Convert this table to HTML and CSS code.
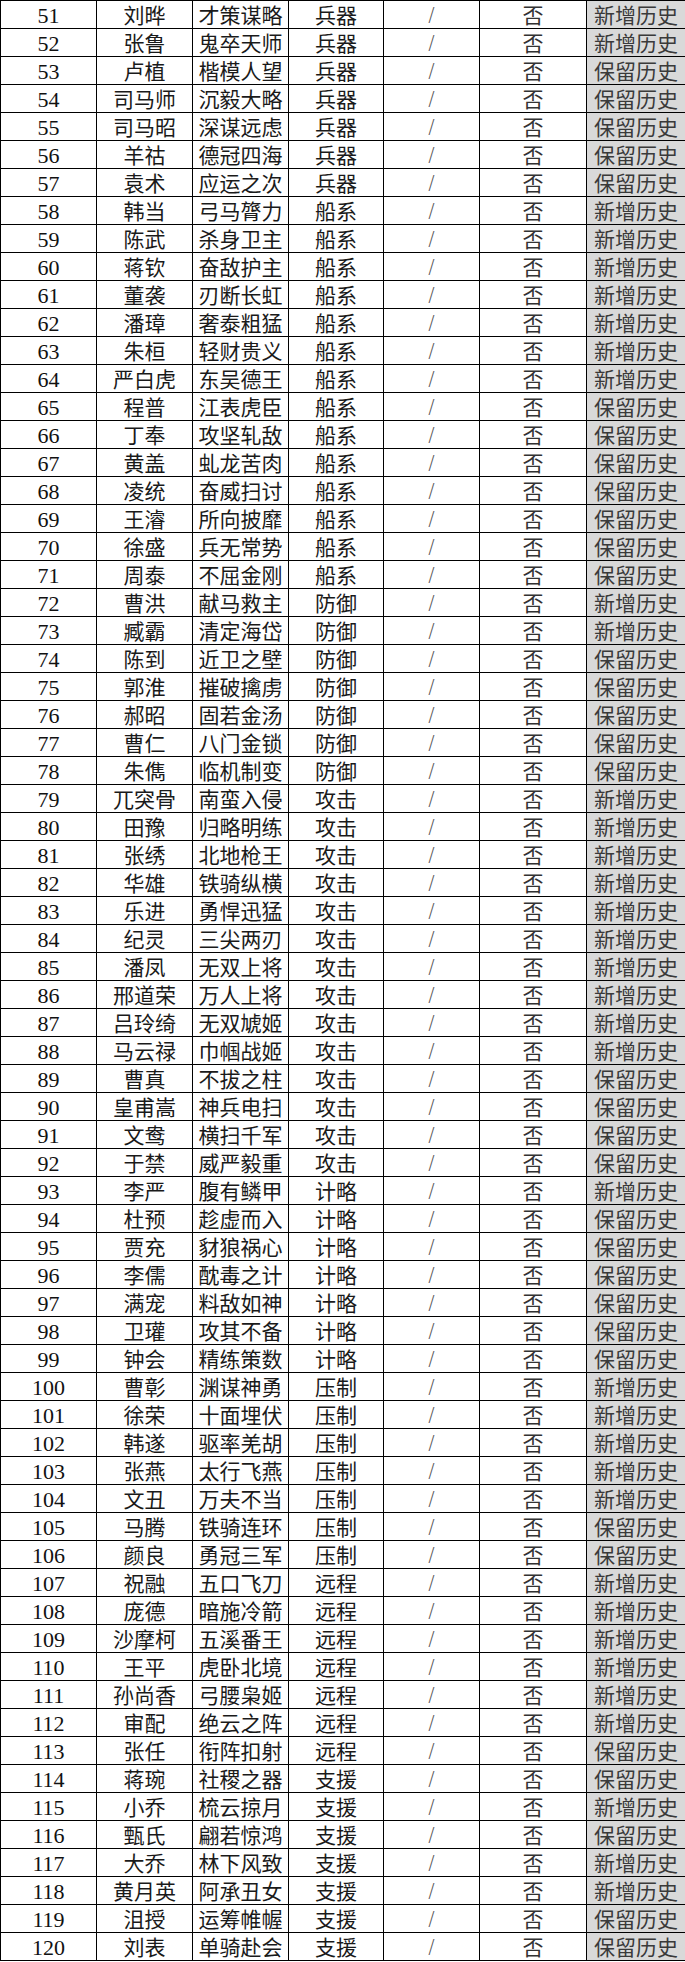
FILE: index.html
```html
<!DOCTYPE html>
<html lang="zh-CN">
<head>
<meta charset="utf-8">
<title>武将技能表</title>
<link rel="stylesheet" href="styles.css">
</head>
<body>
<div class="sheet">
<div class="row"><div class="c num">51</div><div class="c">刘晔</div><div class="c">才策谋略</div><div class="c">兵器</div><div class="c slash">/</div><div class="c no">否</div><div class="c tag">新增历史</div></div>
<div class="row"><div class="c num">52</div><div class="c">张鲁</div><div class="c">鬼卒天师</div><div class="c">兵器</div><div class="c slash">/</div><div class="c no">否</div><div class="c tag">新增历史</div></div>
<div class="row"><div class="c num">53</div><div class="c">卢植</div><div class="c">楷模人望</div><div class="c">兵器</div><div class="c slash">/</div><div class="c no">否</div><div class="c tag">保留历史</div></div>
<div class="row"><div class="c num">54</div><div class="c">司马师</div><div class="c">沉毅大略</div><div class="c">兵器</div><div class="c slash">/</div><div class="c no">否</div><div class="c tag">保留历史</div></div>
<div class="row"><div class="c num">55</div><div class="c">司马昭</div><div class="c">深谋远虑</div><div class="c">兵器</div><div class="c slash">/</div><div class="c no">否</div><div class="c tag">保留历史</div></div>
<div class="row"><div class="c num">56</div><div class="c">羊祜</div><div class="c">德冠四海</div><div class="c">兵器</div><div class="c slash">/</div><div class="c no">否</div><div class="c tag">保留历史</div></div>
<div class="row"><div class="c num">57</div><div class="c">袁术</div><div class="c">应运之次</div><div class="c">兵器</div><div class="c slash">/</div><div class="c no">否</div><div class="c tag">保留历史</div></div>
<div class="row"><div class="c num">58</div><div class="c">韩当</div><div class="c">弓马膂力</div><div class="c">船系</div><div class="c slash">/</div><div class="c no">否</div><div class="c tag">新增历史</div></div>
<div class="row"><div class="c num">59</div><div class="c">陈武</div><div class="c">杀身卫主</div><div class="c">船系</div><div class="c slash">/</div><div class="c no">否</div><div class="c tag">新增历史</div></div>
<div class="row"><div class="c num">60</div><div class="c">蒋钦</div><div class="c">奋敌护主</div><div class="c">船系</div><div class="c slash">/</div><div class="c no">否</div><div class="c tag">新增历史</div></div>
<div class="row"><div class="c num">61</div><div class="c">董袭</div><div class="c">刃断长虹</div><div class="c">船系</div><div class="c slash">/</div><div class="c no">否</div><div class="c tag">新增历史</div></div>
<div class="row"><div class="c num">62</div><div class="c">潘璋</div><div class="c">奢泰粗猛</div><div class="c">船系</div><div class="c slash">/</div><div class="c no">否</div><div class="c tag">新增历史</div></div>
<div class="row"><div class="c num">63</div><div class="c">朱桓</div><div class="c">轻财贵义</div><div class="c">船系</div><div class="c slash">/</div><div class="c no">否</div><div class="c tag">新增历史</div></div>
<div class="row"><div class="c num">64</div><div class="c">严白虎</div><div class="c">东吴德王</div><div class="c">船系</div><div class="c slash">/</div><div class="c no">否</div><div class="c tag">新增历史</div></div>
<div class="row"><div class="c num">65</div><div class="c">程普</div><div class="c">江表虎臣</div><div class="c">船系</div><div class="c slash">/</div><div class="c no">否</div><div class="c tag">保留历史</div></div>
<div class="row"><div class="c num">66</div><div class="c">丁奉</div><div class="c">攻坚轧敌</div><div class="c">船系</div><div class="c slash">/</div><div class="c no">否</div><div class="c tag">保留历史</div></div>
<div class="row"><div class="c num">67</div><div class="c">黄盖</div><div class="c">虬龙苦肉</div><div class="c">船系</div><div class="c slash">/</div><div class="c no">否</div><div class="c tag">保留历史</div></div>
<div class="row"><div class="c num">68</div><div class="c">凌统</div><div class="c">奋威扫讨</div><div class="c">船系</div><div class="c slash">/</div><div class="c no">否</div><div class="c tag">保留历史</div></div>
<div class="row"><div class="c num">69</div><div class="c">王濬</div><div class="c">所向披靡</div><div class="c">船系</div><div class="c slash">/</div><div class="c no">否</div><div class="c tag">保留历史</div></div>
<div class="row"><div class="c num">70</div><div class="c">徐盛</div><div class="c">兵无常势</div><div class="c">船系</div><div class="c slash">/</div><div class="c no">否</div><div class="c tag">保留历史</div></div>
<div class="row"><div class="c num">71</div><div class="c">周泰</div><div class="c">不屈金刚</div><div class="c">船系</div><div class="c slash">/</div><div class="c no">否</div><div class="c tag">保留历史</div></div>
<div class="row"><div class="c num">72</div><div class="c">曹洪</div><div class="c">献马救主</div><div class="c">防御</div><div class="c slash">/</div><div class="c no">否</div><div class="c tag">新增历史</div></div>
<div class="row"><div class="c num">73</div><div class="c">臧霸</div><div class="c">清定海岱</div><div class="c">防御</div><div class="c slash">/</div><div class="c no">否</div><div class="c tag">新增历史</div></div>
<div class="row"><div class="c num">74</div><div class="c">陈到</div><div class="c">近卫之壁</div><div class="c">防御</div><div class="c slash">/</div><div class="c no">否</div><div class="c tag">保留历史</div></div>
<div class="row"><div class="c num">75</div><div class="c">郭淮</div><div class="c">摧破擒虏</div><div class="c">防御</div><div class="c slash">/</div><div class="c no">否</div><div class="c tag">保留历史</div></div>
<div class="row"><div class="c num">76</div><div class="c">郝昭</div><div class="c">固若金汤</div><div class="c">防御</div><div class="c slash">/</div><div class="c no">否</div><div class="c tag">保留历史</div></div>
<div class="row"><div class="c num">77</div><div class="c">曹仁</div><div class="c">八门金锁</div><div class="c">防御</div><div class="c slash">/</div><div class="c no">否</div><div class="c tag">保留历史</div></div>
<div class="row"><div class="c num">78</div><div class="c">朱儁</div><div class="c">临机制变</div><div class="c">防御</div><div class="c slash">/</div><div class="c no">否</div><div class="c tag">保留历史</div></div>
<div class="row"><div class="c num">79</div><div class="c">兀突骨</div><div class="c">南蛮入侵</div><div class="c">攻击</div><div class="c slash">/</div><div class="c no">否</div><div class="c tag">新增历史</div></div>
<div class="row"><div class="c num">80</div><div class="c">田豫</div><div class="c">归略明练</div><div class="c">攻击</div><div class="c slash">/</div><div class="c no">否</div><div class="c tag">新增历史</div></div>
<div class="row"><div class="c num">81</div><div class="c">张绣</div><div class="c">北地枪王</div><div class="c">攻击</div><div class="c slash">/</div><div class="c no">否</div><div class="c tag">新增历史</div></div>
<div class="row"><div class="c num">82</div><div class="c">华雄</div><div class="c">铁骑纵横</div><div class="c">攻击</div><div class="c slash">/</div><div class="c no">否</div><div class="c tag">新增历史</div></div>
<div class="row"><div class="c num">83</div><div class="c">乐进</div><div class="c">勇悍迅猛</div><div class="c">攻击</div><div class="c slash">/</div><div class="c no">否</div><div class="c tag">新增历史</div></div>
<div class="row"><div class="c num">84</div><div class="c">纪灵</div><div class="c">三尖两刃</div><div class="c">攻击</div><div class="c slash">/</div><div class="c no">否</div><div class="c tag">新增历史</div></div>
<div class="row"><div class="c num">85</div><div class="c">潘凤</div><div class="c">无双上将</div><div class="c">攻击</div><div class="c slash">/</div><div class="c no">否</div><div class="c tag">新增历史</div></div>
<div class="row"><div class="c num">86</div><div class="c">邢道荣</div><div class="c">万人上将</div><div class="c">攻击</div><div class="c slash">/</div><div class="c no">否</div><div class="c tag">新增历史</div></div>
<div class="row"><div class="c num">87</div><div class="c">吕玲绮</div><div class="c">无双虓姬</div><div class="c">攻击</div><div class="c slash">/</div><div class="c no">否</div><div class="c tag">新增历史</div></div>
<div class="row"><div class="c num">88</div><div class="c">马云禄</div><div class="c">巾帼战姬</div><div class="c">攻击</div><div class="c slash">/</div><div class="c no">否</div><div class="c tag">新增历史</div></div>
<div class="row"><div class="c num">89</div><div class="c">曹真</div><div class="c">不拔之柱</div><div class="c">攻击</div><div class="c slash">/</div><div class="c no">否</div><div class="c tag">保留历史</div></div>
<div class="row"><div class="c num">90</div><div class="c">皇甫嵩</div><div class="c">神兵电扫</div><div class="c">攻击</div><div class="c slash">/</div><div class="c no">否</div><div class="c tag">保留历史</div></div>
<div class="row"><div class="c num">91</div><div class="c">文鸯</div><div class="c">横扫千军</div><div class="c">攻击</div><div class="c slash">/</div><div class="c no">否</div><div class="c tag">保留历史</div></div>
<div class="row"><div class="c num">92</div><div class="c">于禁</div><div class="c">威严毅重</div><div class="c">攻击</div><div class="c slash">/</div><div class="c no">否</div><div class="c tag">保留历史</div></div>
<div class="row"><div class="c num">93</div><div class="c">李严</div><div class="c">腹有鳞甲</div><div class="c">计略</div><div class="c slash">/</div><div class="c no">否</div><div class="c tag">新增历史</div></div>
<div class="row"><div class="c num">94</div><div class="c">杜预</div><div class="c">趁虚而入</div><div class="c">计略</div><div class="c slash">/</div><div class="c no">否</div><div class="c tag">保留历史</div></div>
<div class="row"><div class="c num">95</div><div class="c">贾充</div><div class="c">豺狼祸心</div><div class="c">计略</div><div class="c slash">/</div><div class="c no">否</div><div class="c tag">保留历史</div></div>
<div class="row"><div class="c num">96</div><div class="c">李儒</div><div class="c">酖毒之计</div><div class="c">计略</div><div class="c slash">/</div><div class="c no">否</div><div class="c tag">保留历史</div></div>
<div class="row"><div class="c num">97</div><div class="c">满宠</div><div class="c">料敌如神</div><div class="c">计略</div><div class="c slash">/</div><div class="c no">否</div><div class="c tag">保留历史</div></div>
<div class="row"><div class="c num">98</div><div class="c">卫瓘</div><div class="c">攻其不备</div><div class="c">计略</div><div class="c slash">/</div><div class="c no">否</div><div class="c tag">保留历史</div></div>
<div class="row"><div class="c num">99</div><div class="c">钟会</div><div class="c">精练策数</div><div class="c">计略</div><div class="c slash">/</div><div class="c no">否</div><div class="c tag">保留历史</div></div>
<div class="row"><div class="c num">100</div><div class="c">曹彰</div><div class="c">渊谋神勇</div><div class="c">压制</div><div class="c slash">/</div><div class="c no">否</div><div class="c tag">新增历史</div></div>
<div class="row"><div class="c num">101</div><div class="c">徐荣</div><div class="c">十面埋伏</div><div class="c">压制</div><div class="c slash">/</div><div class="c no">否</div><div class="c tag">新增历史</div></div>
<div class="row"><div class="c num">102</div><div class="c">韩遂</div><div class="c">驱率羌胡</div><div class="c">压制</div><div class="c slash">/</div><div class="c no">否</div><div class="c tag">新增历史</div></div>
<div class="row"><div class="c num">103</div><div class="c">张燕</div><div class="c">太行飞燕</div><div class="c">压制</div><div class="c slash">/</div><div class="c no">否</div><div class="c tag">新增历史</div></div>
<div class="row"><div class="c num">104</div><div class="c">文丑</div><div class="c">万夫不当</div><div class="c">压制</div><div class="c slash">/</div><div class="c no">否</div><div class="c tag">新增历史</div></div>
<div class="row"><div class="c num">105</div><div class="c">马腾</div><div class="c">铁骑连环</div><div class="c">压制</div><div class="c slash">/</div><div class="c no">否</div><div class="c tag">保留历史</div></div>
<div class="row"><div class="c num">106</div><div class="c">颜良</div><div class="c">勇冠三军</div><div class="c">压制</div><div class="c slash">/</div><div class="c no">否</div><div class="c tag">保留历史</div></div>
<div class="row"><div class="c num">107</div><div class="c">祝融</div><div class="c">五口飞刀</div><div class="c">远程</div><div class="c slash">/</div><div class="c no">否</div><div class="c tag">新增历史</div></div>
<div class="row"><div class="c num">108</div><div class="c">庞德</div><div class="c">暗施冷箭</div><div class="c">远程</div><div class="c slash">/</div><div class="c no">否</div><div class="c tag">新增历史</div></div>
<div class="row"><div class="c num">109</div><div class="c">沙摩柯</div><div class="c">五溪番王</div><div class="c">远程</div><div class="c slash">/</div><div class="c no">否</div><div class="c tag">新增历史</div></div>
<div class="row"><div class="c num">110</div><div class="c">王平</div><div class="c">虎卧北境</div><div class="c">远程</div><div class="c slash">/</div><div class="c no">否</div><div class="c tag">新增历史</div></div>
<div class="row"><div class="c num">111</div><div class="c">孙尚香</div><div class="c">弓腰枭姬</div><div class="c">远程</div><div class="c slash">/</div><div class="c no">否</div><div class="c tag">新增历史</div></div>
<div class="row"><div class="c num">112</div><div class="c">审配</div><div class="c">绝云之阵</div><div class="c">远程</div><div class="c slash">/</div><div class="c no">否</div><div class="c tag">新增历史</div></div>
<div class="row"><div class="c num">113</div><div class="c">张任</div><div class="c">衔阵扣射</div><div class="c">远程</div><div class="c slash">/</div><div class="c no">否</div><div class="c tag">保留历史</div></div>
<div class="row"><div class="c num">114</div><div class="c">蒋琬</div><div class="c">社稷之器</div><div class="c">支援</div><div class="c slash">/</div><div class="c no">否</div><div class="c tag">保留历史</div></div>
<div class="row"><div class="c num">115</div><div class="c">小乔</div><div class="c">梳云掠月</div><div class="c">支援</div><div class="c slash">/</div><div class="c no">否</div><div class="c tag">新增历史</div></div>
<div class="row"><div class="c num">116</div><div class="c">甄氏</div><div class="c">翩若惊鸿</div><div class="c">支援</div><div class="c slash">/</div><div class="c no">否</div><div class="c tag">保留历史</div></div>
<div class="row"><div class="c num">117</div><div class="c">大乔</div><div class="c">林下风致</div><div class="c">支援</div><div class="c slash">/</div><div class="c no">否</div><div class="c tag">新增历史</div></div>
<div class="row"><div class="c num">118</div><div class="c">黄月英</div><div class="c">阿承丑女</div><div class="c">支援</div><div class="c slash">/</div><div class="c no">否</div><div class="c tag">新增历史</div></div>
<div class="row"><div class="c num">119</div><div class="c">沮授</div><div class="c">运筹帷幄</div><div class="c">支援</div><div class="c slash">/</div><div class="c no">否</div><div class="c tag">保留历史</div></div>
<div class="row"><div class="c num">120</div><div class="c">刘表</div><div class="c">单骑赴会</div><div class="c">支援</div><div class="c slash">/</div><div class="c no">否</div><div class="c tag">保留历史</div></div>
</div>
</body>
</html>
```
FILE: styles.css
```css
html, body {
  margin: 0;
  padding: 0;
  background: #ffffff;
}

body {
  width: 685px;
  overflow: hidden;
}

.sheet {
  width: 685px;
  border-bottom: 1px solid #000;
}

.row {
  display: grid;
  grid-template-columns: 96px 96px 96px 95px 96px 107px 99px;
  height: 28px;
}

.c {
  box-sizing: border-box;
  height: 28px;
  border-top: 1px solid #000;
  border-left: 1px solid #000;
  text-align: center;
  white-space: nowrap;
  overflow: hidden;
  font-family: "Noto Sans CJK SC", "Noto Sans", sans-serif;
  font-size: 21px;
  line-height: 27px;
  color: #1a1a1a;
}

.num {
  font-family: "Liberation Serif", serif;
  font-size: 22px;
  line-height: 25px;
  padding-top: 2px;
  color: #111;
}

.slash {
  font-family: "DejaVu Sans", sans-serif;
  font-size: 19px;
  font-weight: 300;
  color: #555;
}

.no {
  color: #333;
}

.tag {
  background: #d9d9d9;
  color: #3a3a3a;
}
```
